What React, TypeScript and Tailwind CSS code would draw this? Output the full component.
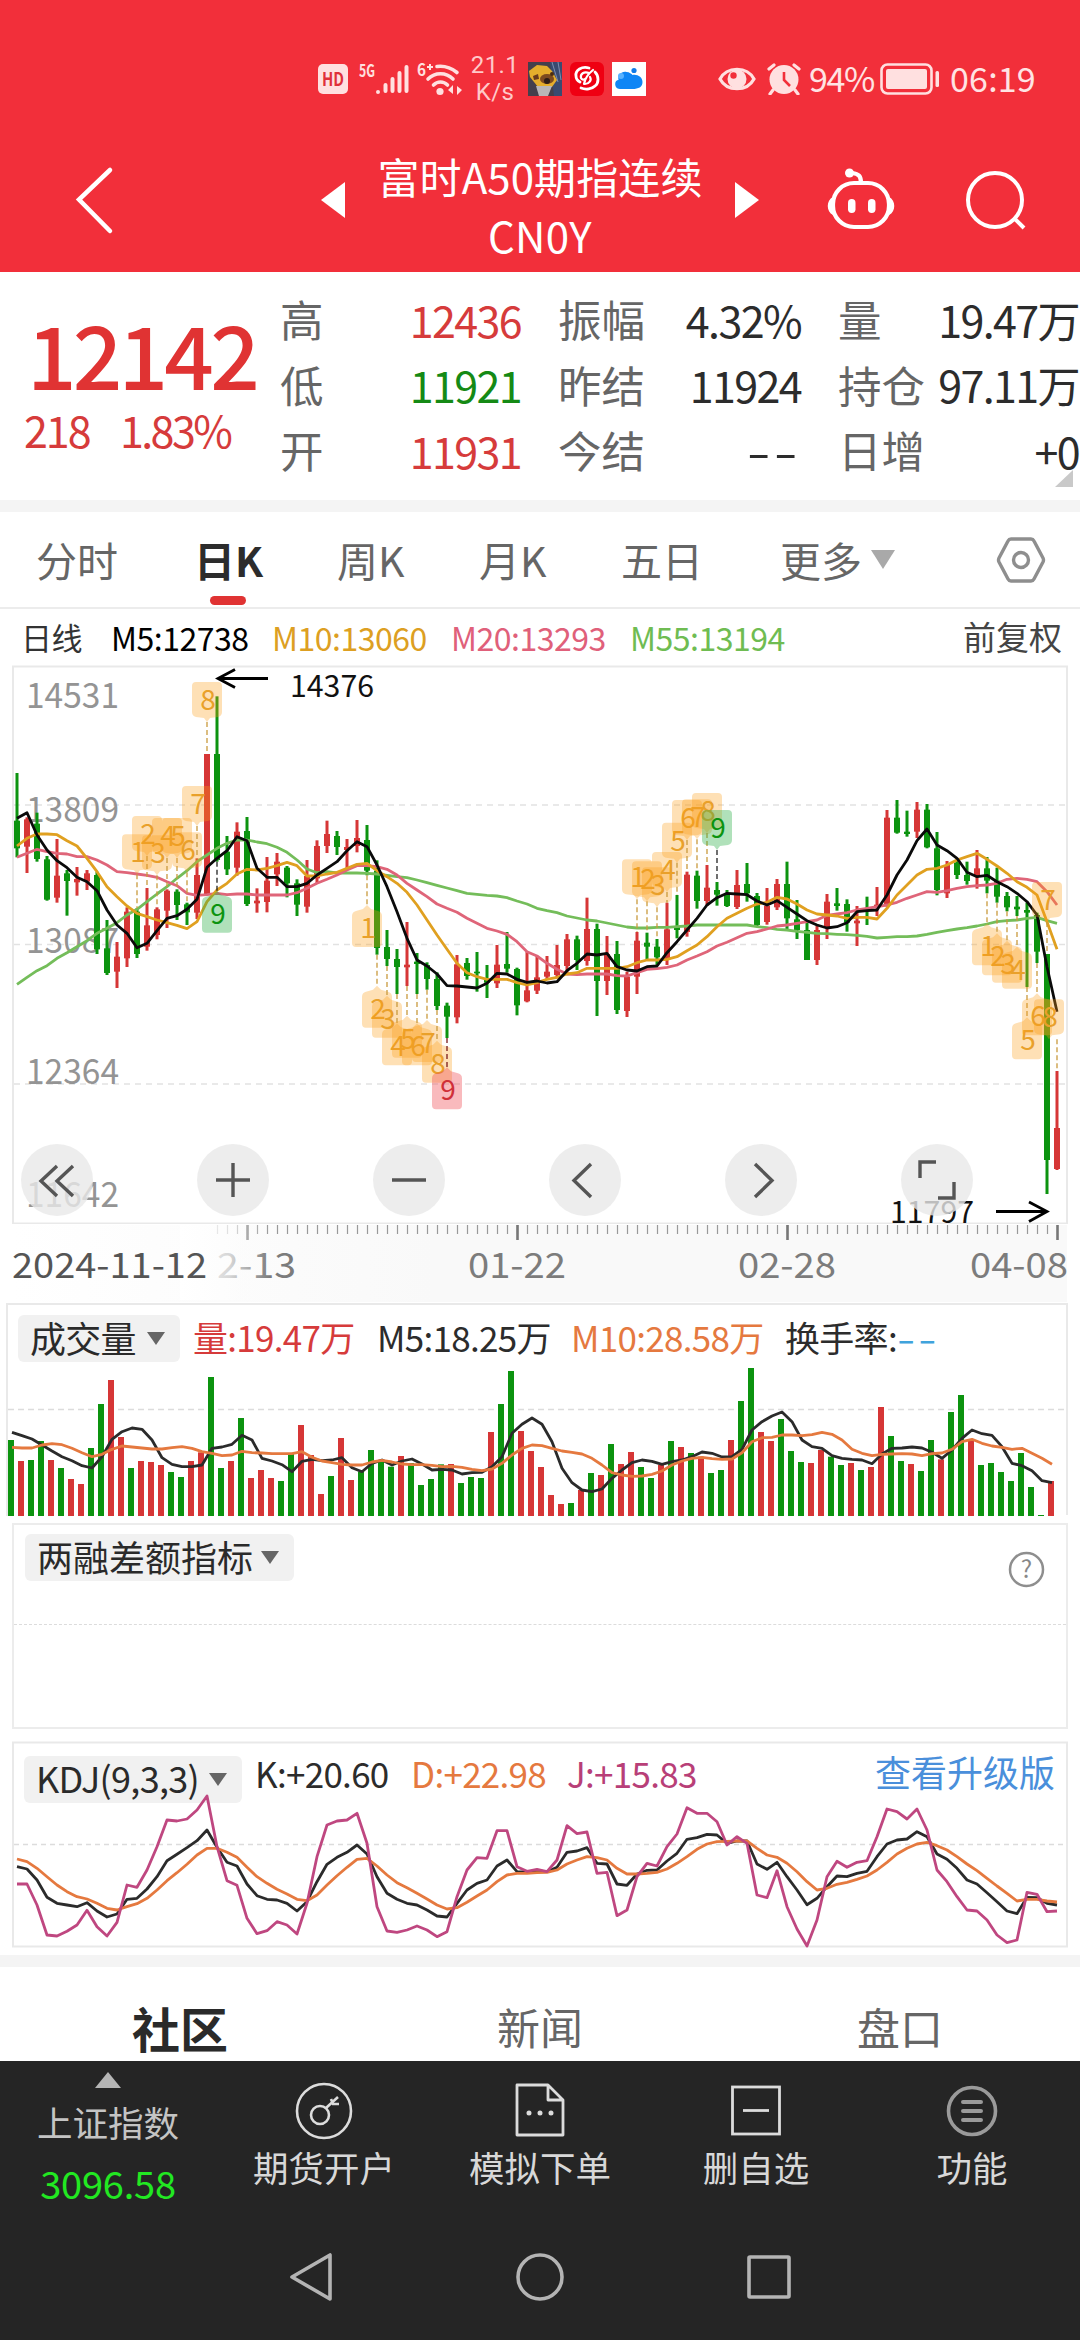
import React from 'react';

const RED = '#d63636';
const GREEN = '#0c930f';

const X0 = 17;
const STEP = 10;

// One row per day: up/down, high, body top, body bottom, low (thirds of a pixel)
type Candle = ['u' | 'd', number, number, number, number];

const candles: Candle[] = [
  ['d', 519, 662, 745, 772], ['u', 652, 658, 740, 819], ['d', 638, 671, 777, 785], ['d', 768, 778, 899, 902],
  ['u', 717, 827, 893, 908], ['d', 810, 820, 843, 947], ['u', 801, 837, 847, 887], ['u', 810, 820, 845, 870],
  ['d', 815, 825, 1048, 1062], ['d', 960, 1045, 1119, 1125], ['u', 1026, 1070, 1115, 1164], ['u', 922, 935, 1075, 1101],
  ['d', 925, 935, 1062, 1074], ['u', 864, 976, 1040, 1052], ['u', 922, 928, 1005, 1018], ['u', 868, 872, 932, 984],
  ['d', 868, 875, 915, 960], ['d', 908, 913, 937, 975], ['u', 775, 825, 938, 957], ['u', 462, 462, 883, 883],
  ['d', 289, 462, 780, 785], ['d', 708, 755, 808, 825], ['u', 667, 695, 803, 827], ['d', 651, 693, 912, 918],
  ['u', 865, 902, 910, 938], ['u', 771, 842, 906, 937], ['u', 759, 785, 823, 858], ['d', 798, 803, 850, 892],
  ['d', 838, 850, 914, 948], ['u', 780, 828, 920, 938], ['u', 721, 738, 835, 852], ['u', 662, 702, 738, 759],
  ['d', 693, 708, 741, 765], ['u', 717, 741, 750, 805], ['u', 660, 714, 738, 757], ['d', 675, 720, 812, 826],
  ['d', 781, 812, 1044, 1064], ['d', 990, 1041, 1077, 1098], ['d', 1047, 1077, 1101, 1182], ['u', 966, 1094, 1102, 1158],
  ['d', 1059, 1085, 1092, 1182], ['d', 1087, 1095, 1137, 1169], ['d', 1117, 1137, 1218, 1230], ['d', 1208, 1217, 1250, 1314],
  ['u', 1065, 1093, 1252, 1270], ['d', 1074, 1089, 1128, 1139], ['d', 1056, 1115, 1120, 1175], ['d', 1095, 1140, 1148, 1194],
  ['u', 1035, 1094, 1150, 1164], ['d', 996, 1092, 1106, 1118], ['d', 1103, 1107, 1216, 1246], ['u', 1055, 1171, 1204, 1207],
  ['u', 1068, 1132, 1172, 1182], ['u', 1068, 1115, 1130, 1140], ['u', 1035, 1095, 1125, 1135], ['u', 1002, 1018, 1098, 1122],
  ['d', 1007, 1018, 1080, 1110], ['u', 893, 987, 1083, 1097], ['d', 971, 987, 1143, 1248], ['u', 1008, 1062, 1143, 1185],
  ['d', 1023, 1062, 1230, 1242], ['u', 1115, 1130, 1233, 1251], ['u', 996, 1022, 1130, 1182], ['d', 998, 1028, 1040, 1080],
  ['d', 1017, 1040, 1072, 1098], ['u', 908, 988, 1080, 1095], ['d', 885, 980, 990, 1015], ['u', 815, 824, 996, 1010],
  ['d', 812, 827, 903, 926], ['u', 795, 863, 903, 918], ['d', 846, 870, 884, 917], ['d', 870, 884, 918, 921],
  ['u', 810, 855, 921, 927], ['d', 789, 852, 880, 905], ['d', 879, 888, 975, 980], ['u', 864, 917, 966, 974],
  ['u', 837, 852, 922, 930], ['d', 785, 852, 955, 987], ['d', 900, 958, 990, 1017], ['d', 962, 990, 1080, 1080],
  ['u', 978, 990, 1080, 1095], ['u', 882, 905, 983, 1017], ['d', 864, 910, 918, 932], ['d', 898, 912, 968, 995],
  ['u', 918, 962, 970, 1038], ['d', 890, 925, 930, 975], ['u', 861, 914, 924, 948], ['u', 630, 653, 912, 920],
  ['d', 600, 653, 698, 701], ['d', 632, 695, 702, 710], ['u', 606, 629, 695, 714], ['d', 612, 629, 742, 745],
  ['d', 696, 745, 870, 886], ['u', 783, 795, 880, 894], ['d', 780, 788, 825, 837], ['d', 785, 825, 843, 854],
  ['u', 750, 805, 825, 866], ['d', 771, 805, 842, 880], ['d', 803, 842, 890, 908], ['d', 876, 888, 922, 934],
  ['d', 888, 920, 928, 948], ['d', 908, 930, 938, 1161], ['d', 938, 945, 1055, 1089], ['d', 1062, 1062, 1680, 1782],
  ['u', 1413, 1584, 1707, 1710],
];

const ma5 = [
  655, 638, 705, 750, 782, 803, 832, 845, 872, 930, 975, 1000, 1043, 1030, 992, 955, 947, 928, 898, 802,
  775, 752, 710, 722, 805, 832, 832, 860, 860, 850, 825, 805, 785, 752, 725, 740, 795, 860, 935, 1015,
  1080, 1098, 1122, 1157, 1158, 1161, 1164, 1150, 1120, 1122, 1138, 1147, 1143, 1149, 1145, 1112, 1090, 1062, 1065, 1060,
  1100, 1110, 1113, 1100, 1098, 1058, 1025, 990, 955, 915, 893, 880, 882, 884, 903, 915, 902, 922, 942, 962,
  975, 984, 980, 968, 935, 932, 930, 885, 825, 780, 722, 687, 735, 752, 775, 817, 830, 826, 845, 860,
  880, 905, 945, 1100, 1235,
];
const ma10 = [
  738, 715, 702, 702, 704, 722, 738, 775, 815, 860, 890, 918, 940, 950, 960, 968, 976, 986, 965, 905,
  870, 850, 822, 808, 810, 805, 797, 787, 797, 828, 828, 822, 817, 805, 793, 790, 812, 830, 850, 877,
  915, 960, 1005, 1048, 1090, 1118, 1130, 1138, 1138, 1138, 1148, 1155, 1148, 1138, 1132, 1122, 1118, 1105, 1105, 1105,
  1105, 1100, 1088, 1080, 1080, 1078, 1070, 1052, 1035, 1010, 980, 955, 940, 925, 912, 907, 892, 897, 912, 930,
  942, 945, 948, 955, 952, 952, 957, 925, 885, 855, 825, 808, 805, 795, 780, 770, 760, 778, 798, 820,
  845, 862, 885, 965, 1048,
];
const ma20 = [
  772, 760, 748, 755, 760, 762, 770, 770, 780, 795, 815, 818, 822, 826, 832, 845, 857, 880, 886, 884,
  880, 884, 882, 882, 885, 885, 885, 885, 878, 865, 850, 838, 825, 810, 797, 797, 800, 808, 825, 850,
  870, 890, 912, 925, 937, 955, 970, 985, 993, 1003, 1025, 1055, 1068, 1090, 1108, 1122, 1124, 1122, 1122, 1122,
  1127, 1128, 1118, 1108, 1106, 1102, 1095, 1080, 1068, 1055, 1038, 1027, 1013, 1000, 995, 987, 978, 975, 970, 965,
  960, 946, 942, 938, 930, 925, 920, 915, 907, 895, 885, 875, 877, 872, 865, 860, 857, 855, 850, 838,
  835, 838, 845, 875, 915,
];
const ma55 = [
  1153, 1132, 1112, 1097, 1075, 1058, 1040, 1022, 1000, 985, 968, 945, 928, 905, 882, 860, 835, 812, 785, 765,
  745, 730, 720, 720, 726, 731, 742, 757, 780, 807, 818, 815, 819, 819, 819, 820, 822, 826, 830, 833,
  840, 848, 856, 864, 872, 880, 883, 886, 888, 893, 903, 912, 925, 932, 938, 948, 954, 960, 963, 969,
  975, 981, 984, 984, 982, 982, 980, 978, 975, 975, 975, 975, 975, 975, 980, 983, 988, 990, 994, 997,
  1000, 1001, 1003, 1004, 1006, 1009, 1014, 1012, 1010, 1010, 1008, 1003, 997, 992, 987, 983, 978, 972, 965, 962,
  960, 955, 952, 962, 970,
];

const volumes = [
  450, 513, 510, 453, 510, 534, 567, 582, 474, 342, 270, 441, 534, 513, 516, 525, 546, 561, 513, 487,
  261, 534, 513, 384, 564, 540, 564, 573, 490, 405, 495, 612, 558, 444, 570, 545, 480, 512, 530, 498,
  519, 585, 567, 523, 522, 579, 561, 564, 426, 342, 243, 423, 483, 531, 615, 642, 639, 600, 549, 555,
  462, 522, 486, 531, 564, 525, 453, 471, 489, 500, 549, 540, 450, 333, 234, 426, 453, 387, 483, 516,
  519, 480, 500, 525, 519, 540, 531, 351, 438, 513, 522, 543, 450, 508, 366, 315, 450, 525, 519, 546,
  573, 489, 591, 675, 573,
];
const vol5 = [
  427, 437, 447, 465, 483, 500, 512, 527, 534, 500, 448, 425, 414, 418, 450, 503, 523, 530, 530, 525,
  475, 471, 463, 436, 450, 505, 513, 524, 545, 514, 508, 512, 510, 503, 533, 545, 520, 510, 525, 513,
  507, 522, 540, 538, 540, 552, 548, 547, 530, 500, 430, 403, 384, 403, 455, 535, 578, 600, 605, 597,
  565, 540, 518, 510, 514, 523, 515, 510, 500, 486, 490, 501, 500, 478, 420, 395, 378, 366, 395, 450,
  470, 475, 497, 505, 508, 510, 521, 492, 475, 474, 471, 474, 487, 505, 480, 445, 420, 431, 436, 470,
  520, 527, 542, 572, 578,
];
const vol10 = [
  472, 474, 474, 465, 461, 464, 475, 488, 500, 493, 478, 468, 471, 474, 477, 477, 473, 470, 475, 485,
  490, 497, 495, 484, 488, 489, 491, 491, 491, 485, 502, 513, 518, 523, 525, 525, 516, 511, 516, 522,
  524, 524, 526, 530, 529, 532, 538, 542, 537, 520, 495, 475, 465, 467, 475, 483, 487, 492, 505, 525,
  548, 555, 559, 558, 553, 543, 525, 513, 505, 502, 506, 508, 507, 488, 455, 443, 442, 435, 435, 437,
  434, 427, 433, 450, 478, 490, 497, 493, 492, 491, 492, 497, 491, 489, 478, 455, 448, 460, 468, 472,
  478, 475, 490, 505, 523,
];

const kLine = [
  410, 417, 450, 502, 520, 525, 530, 518, 543, 561, 552, 508, 505, 477, 440, 392, 373, 353, 332, 300,
  352, 397, 408, 462, 497, 508, 510, 520, 543, 515, 455, 403, 382, 367, 345, 372, 440, 490, 508, 520,
  525, 540, 558, 561, 520, 480, 460, 450, 408, 390, 425, 426, 423, 425, 412, 367, 363, 353, 400, 402,
  462, 466, 432, 421, 420, 393, 370, 328, 323, 313, 315, 340, 333, 333, 402, 418, 397, 440, 480, 524,
  505, 470, 438, 440, 430, 424, 380, 342, 330, 327, 305, 320, 372, 388, 415, 450, 462, 488, 515, 543,
  551, 502, 503, 520, 525,
];
const dLine = [
  387, 395, 415, 440, 465, 485, 500, 507, 520, 535, 540, 530, 521, 505, 480, 452, 428, 403, 375, 355,
  355, 367, 382, 412, 440, 460, 478, 492, 508, 512, 495, 465, 437, 412, 388, 385, 408, 435, 458, 473,
  490, 507, 525, 537, 533, 517, 498, 480, 455, 435, 430, 430, 428, 427, 420, 402, 390, 380, 383, 390,
  415, 432, 432, 430, 427, 417, 400, 380, 358, 342, 335, 334, 333, 333, 355, 375, 382, 400, 425, 455,
  480, 475, 463, 457, 448, 438, 420, 397, 372, 355, 342, 337, 347, 360, 380, 402, 422, 445, 468, 490,
  513, 508, 508, 513, 516,
];
const jLine = [
  462, 462, 525, 615, 618, 604, 585, 541, 590, 618, 577, 465, 472, 420, 350, 270, 273, 267, 240, 198,
  350, 452, 466, 565, 611, 602, 575, 585, 612, 520, 380, 285, 273, 270, 250, 340, 530, 603, 607, 600,
  588, 600, 620, 605, 500, 420, 383, 385, 302, 302, 410, 424, 418, 425, 390, 287, 311, 306, 430, 427,
  557, 540, 440, 400, 408, 350, 312, 233, 250, 250, 275, 345, 320, 340, 495, 503, 422, 530, 597, 648,
  570, 440, 394, 412, 397, 392, 320, 237, 245, 267, 237, 300, 420, 455, 500, 540, 543, 570, 615, 638,
  630, 487, 493, 545, 543,
];

// Nine-turn markers: label, candle index, top, side of the candle, tone
type Marker = [string, number, number, 'above' | 'below', 'orange' | 'green' | 'red'];

const markers: Marker[] = [
  ['1', 12, 703, 'above', 'orange'], ['2', 13, 648, 'above', 'orange'], ['3', 14, 706, 'above', 'orange'],
  ['4', 15, 654, 'above', 'orange'], ['5', 16, 654, 'above', 'orange'], ['6', 17, 697, 'above', 'orange'],
  ['7', 18, 558, 'above', 'orange'], ['8', 19, 246, 'above', 'orange'], ['9', 20, 872, 'below', 'green'],
  ['1', 35, 915, 'below', 'orange'], ['2', 36, 1157, 'below', 'orange'], ['3', 37, 1187, 'below', 'orange'],
  ['4', 38, 1270, 'below', 'orange'], ['5', 39, 1247, 'below', 'orange'], ['6', 40, 1270, 'below', 'orange'],
  ['7', 41, 1260, 'below', 'orange'], ['8', 42, 1322, 'below', 'orange'], ['9', 43, 1402, 'below', 'red'],
  ['1', 62, 778, 'above', 'orange'], ['2', 63, 784, 'above', 'orange'], ['3', 64, 802, 'above', 'orange'],
  ['4', 65, 756, 'above', 'orange'], ['5', 66, 668, 'above', 'orange'], ['6', 67, 600, 'above', 'orange'],
  ['7', 68, 598, 'above', 'orange'], ['8', 69, 579, 'above', 'orange'], ['9', 70, 630, 'above', 'green'],
  ['1', 97, 970, 'below', 'orange'], ['2', 98, 1000, 'below', 'orange'], ['3', 99, 1022, 'below', 'orange'],
  ['4', 100, 1040, 'below', 'orange'], ['5', 101, 1252, 'below', 'orange'], ['6', 102, 1180, 'below', 'orange'],
  ['7', 103, 846, 'above', 'orange'], ['8', 104, 1198, 'above', 'orange'],
];

const markerTones = {
  orange: { box: '#fb9f1a', text: '#e9a02a', line: '#c99a3e', opacity: 0.32 },
  green: { box: '#2fb04a', text: '#0c930f', line: '#222222', opacity: 0.38 },
  red: { box: '#f04a52', text: '#d03038', line: '#7a1a1a', opacity: 0.38 },
};

const px = (i: number) => X0 + i * STEP;

const toPoints = (values: number[], base: number, dx = 0) =>
  values.map((v, i) => `${px(i) + dx},${(base + v / 3).toFixed(1)}`).join(' ');

const Line = ({ values, base, color, dx = 0, width = 2.8 }: { values: number[]; base: number; color: string; dx?: number; width?: number }) => (
  <polyline points={toPoints(values, base, dx)} fill="none" stroke={color} strokeWidth={width} strokeLinejoin="round" />
);

const StatusBar = () => (
  <div className="flex h-[158px] items-center pl-[318px] text-[#ffe3e3]">
    <svg width="30" height="30" viewBox="0 0 30 30">
      <rect width="30" height="30" rx="5" fill="#ffe0e0" />
      <text x="15" y="22" fontSize="19" fontWeight="700" textAnchor="middle" textLength="22" lengthAdjust="spacingAndGlyphs" fill="#e0303a">HD</text>
    </svg>
    <svg className="ml-[10px] overflow-visible" width="52" height="34" viewBox="0 0 52 34">
      <text x="1" y="15" fontSize="17" fontWeight="700" textLength="16" lengthAdjust="spacingAndGlyphs" fill="#ffe0e0">5G</text>
      <g stroke="#ffe0e0" strokeWidth="4" strokeLinecap="round">
        <path d="M20 30v0M27.500 29v-6M34.500 29v-12M41.500 29v-18M48.500 29v-24" />
      </g>
    </svg>
    <svg className="ml-[7px] overflow-visible" width="46" height="34" viewBox="0 0 46 34">
      <text x="0" y="14" fontSize="17" fontWeight="700" fill="#ffe0e0" textLength="9" lengthAdjust="spacingAndGlyphs">6</text>
      <path d="M10 5h6M13 2v6" stroke="#ffe0e0" strokeWidth="2" />
      <g fill="none" stroke="#ffe0e0" strokeWidth="3.600" strokeLinecap="round">
        <path d="M20 4.500c8-1 15 2 20 6" />
        <path d="M11 17c7-7 18-7 25 0" />
        <path d="M16.500 23c4-4 10-4 14 0" />
      </g>
      <circle cx="23" cy="29.500" r="3.600" fill="#ffe0e0" />
      <path d="M31 28l5-5v9zM45 28l-5-4v9z" fill="#ffe0e0" />
    </svg>
    <div className="ml-[10px] flex w-[44px] flex-col items-center font-[Roboto] text-[24px] leading-[27px] tracking-[0.4px] text-[#ffc9c9]">
      <span>21.1</span>
      <span>K/s</span>
    </div>
    <svg className="ml-[11px]" width="34" height="34" viewBox="0 0 34 34">
      <rect width="34" height="34" fill="#453f4c" />
      <path d="M22 0h12v34H26z" fill="#3a4a70" />
      <path d="M24 0l6 20M30 0l3 18" stroke="#7f8fb0" strokeWidth="1" />
      <path d="M1 9l8-6 10 1 5 5 5 9-5 7H10L2 15z" fill="#e5ad2c" />
      <path d="M5 14l5-2 1 5-5 1z" fill="#6a3a1c" />
      <ellipse cx="19" cy="17" rx="7" ry="5" fill="#7d4a1f" />
      <circle cx="19" cy="19" r="3" fill="#2d1c16" />
      <circle cx="24" cy="12" r="2" fill="#4b2b12" />
      <path d="M8 24h16l-4 10H11z" fill="#b9b6b8" />
    </svg>
    <svg className="ml-[8px]" width="34" height="34" viewBox="0 0 34 34">
      <rect width="34" height="34" rx="6" fill="#ef0012" />
      <g fill="none" stroke="#fff" strokeWidth="2.200" strokeLinecap="round">
        <path d="M19 6c-7-2-14 2-13 8 0 3 2 5 4 6" strokeWidth="2.800" />
        <path d="M19 11c-5-2-9 1-8 5 1 2 3 2 4 1" />
        <path d="M23 8c-5 4-8 8-9 14" />
        <path d="M25 10c4 4 4 11 0 14-3 3-9 4-14 2" strokeWidth="2.800" />
        <path d="M20 15c2 3-1 7-5 7" />
      </g>
    </svg>
    <svg className="ml-[8px]" width="34" height="34" viewBox="0 0 34 34">
      <rect width="34" height="34" fill="#fff" />
      <path d="M3.500 24c-1-4 1-6 3-6-1-5 3-9 8-8 3 0 5 2 6 3 5-1 10 2 10 7s-4 7-10 7H8c-2 0-4-1-4.500-3z" fill="#0f86f5" />
      <circle cx="22" cy="8.500" r="2.600" fill="#0f7be8" />
      <circle cx="9" cy="14" r="3" fill="#59b2ff" />
    </svg>
    <svg className="ml-[72px]" width="38" height="28" viewBox="0 0 38 28">
      <path d="M2 14C9 1 29 1 36 14 29 27 9 27 2 14z" fill="none" stroke="#ffe0e0" strokeWidth="3.200" />
      <circle cx="19" cy="14" r="9.500" fill="#ffe0e0" />
      <circle cx="15.500" cy="10.500" r="3.200" fill="#f22f3a" />
    </svg>
    <svg className="ml-[11px]" width="34" height="32" viewBox="0 0 34 32">
      <circle cx="17" cy="16.500" r="14.500" fill="#ffe0e0" />
      <path d="M2 6l5-4M32 6l-5-4M6 27l-3 4M28 27l3 4" stroke="#ffe0e0" strokeWidth="3.200" strokeLinecap="round" />
      <path d="M17 9v8l6 6" fill="none" stroke="#f22f3a" strokeWidth="2.600" />
    </svg>
    <span className="mb-[3px] ml-[8px] w-[65px] text-[34px] leading-none tracking-[-1.4px] whitespace-nowrap">94%</span>
    <svg className="ml-[6px]" width="60" height="34" viewBox="0 0 60 34">
      <rect x="1.500" y="2.500" width="50" height="29" rx="6" fill="none" stroke="#ffe0e0" strokeWidth="2.600" />
      <rect x="6" y="7" width="41" height="20" rx="2" fill="#ffe0e0" />
      <rect x="55.500" y="9" width="3.500" height="16" rx="1.500" fill="#ffe0e0" />
    </svg>
    <span className="mb-[3px] ml-[10px] text-[34px] leading-none tracking-[0.2px]">06:19</span>
  </div>
);

const Header = () => (
  <header className="h-[272px] bg-[#f22f3a] text-white">
    <StatusBar />
    <div className="flex h-[114px]">
      <svg className="mt-[7px] ml-[70px]" width="50" height="72" viewBox="0 0 50 72">
        <path d="M40 5L9 34.500 40 66" fill="none" stroke="#fff" strokeWidth="4.500" strokeLinecap="round" />
      </svg>
      <svg className="mt-[24px] ml-[201px]" width="25" height="36" viewBox="0 0 25 36">
        <path d="M24 0v36L0 18z" fill="#fff" />
      </svg>
      <div className="flex w-[388px] flex-col items-center">
        <span className="-mt-[12px] text-[42px] leading-[60px] tracking-[0.1px]">富时A50期指连续</span>
        <span className="text-[42px] leading-[58px] tracking-[0.3px]">CN0Y</span>
      </div>
      <svg className="mt-[24px]" width="25" height="36" viewBox="0 0 25 36">
        <path d="M1 0v36l24-18z" fill="#fff" />
      </svg>
      <svg className="mt-[9px] ml-[66px]" width="72" height="66" viewBox="0 0 72 66">
        <g fill="none" stroke="#fff" strokeWidth="4.200">
          <rect x="8" y="16" width="56" height="44" rx="21" />
          <path d="M36 16c0-7-2-9-9-10" />
        </g>
        <circle cx="24.500" cy="6" r="4.500" fill="#fff" />
        <path d="M8 30C1 33 1 45 8 48zM64 30c7 3 7 15 0 18z" fill="#fff" />
        <rect x="23" y="32" width="7.500" height="14" rx="3.700" fill="#fff" />
        <rect x="43" y="32" width="7.500" height="14" rx="3.700" fill="#fff" />
      </svg>
      <svg className="mt-[11px] ml-[68px]" width="64" height="64" viewBox="0 0 64 64">
        <circle cx="30" cy="31" r="27" fill="none" stroke="#fff" strokeWidth="4" />
        <path d="M49 49l10 10" stroke="#fff" strokeWidth="4" />
      </svg>
    </div>
  </header>
);

const quoteColumns = [
  {
    width: 'w-[241px]',
    rows: [
      { label: '高', value: '12436', color: 'text-[#d63b3b]' },
      { label: '低', value: '11921', color: 'text-[#158a15]' },
      { label: '开', value: '11931', color: 'text-[#d63b3b]' },
    ],
  },
  {
    width: 'w-[243px]',
    rows: [
      { label: '振幅', value: '4.32%', color: 'text-[#2c2c2c]' },
      { label: '昨结', value: '11924', color: 'text-[#2c2c2c]' },
      { label: '今结', value: '--', color: 'origin-right scale-x-160 tracking-[2px] text-[#2c2c2c]' },
    ],
  },
  {
    width: 'w-[241px]',
    rows: [
      { label: '量', value: '19.47万', color: 'text-[#2c2c2c]' },
      { label: '持仓', value: '97.11万', color: 'text-[#2c2c2c]' },
      { label: '日增', value: '+0', color: 'text-[#2c2c2c]' },
    ],
  },
];

const QuotePanel = () => (
  <section className="relative flex h-[228px] bg-white">
    <div className="w-[280px] shrink-0 font-medium text-[#e03333]">
      <div className="mt-[30px] pl-[27px] text-[87px] leading-[100px] tracking-[-3.8px]">12142</div>
      <div className="mt-[2px] flex pl-[24px] text-[43px] leading-[50px] font-normal tracking-[-2px] text-[#d63b3b]">
        <span className="w-[96px]">218</span>
        <span className="tracking-[-2.6px]">1.83%</span>
      </div>
    </div>
    <div className="flex gap-[37px] pt-[14px]">
      {quoteColumns.map((col) => (
        <div key={col.rows[0].label} className={col.width}>
          {col.rows.map((row) => (
            <div key={row.label} className="flex h-[65.500px] items-center justify-between whitespace-nowrap">
              <span className="text-[43.500px] text-[#666]">{row.label}</span>
              <span className={`text-[43px] ${row.value === '--' ? '' : 'tracking-[-1.6px]'} ${row.color}`}>{row.value}</span>
            </div>
          ))}
        </div>
      ))}
    </div>
    <svg className="absolute right-[7px] bottom-[13px]" width="18" height="17" viewBox="0 0 18 17">
      <path d="M18 0v17H0z" fill="#c9c9c9" />
    </svg>
  </section>
);

const PeriodTabs = () => (
  <nav className="flex h-[97px] items-center border-b-2 border-[#ececec] bg-white text-[41px] text-[#666]">
    <span className="ml-[36px] w-[158px]">分时</span>
    <span className="relative w-[143px] font-bold text-[#2c2c2c]">
      日K
      <i className="absolute bottom-[-15px] left-[16px] h-[9px] w-[36px] rounded-full bg-[#e03333]" />
    </span>
    <span className="w-[142px]">周K</span>
    <span className="w-[142px]">月K</span>
    <span className="w-[159px]">五日</span>
    <span>更多</span>
    <svg className="ml-[9px]" width="24" height="19" viewBox="0 0 24 19">
      <path d="M0 0h24L12 19z" fill="#a9a9a9" />
    </svg>
    <svg className="ml-[101px]" width="50" height="46" viewBox="0 0 50 46">
      <g fill="none" stroke="#8e8e8e" strokeWidth="3.400">
        <path d="M15 2h20q2 0 3 2l9 17q1 2 0 4l-9 17q-1 2-3 2H15q-2 0-3-2L3 25q-1-2 0-4l9-17q1-2 3-2z" />
        <circle cx="25" cy="23" r="7.500" />
      </g>
    </svg>
  </nav>
);

const MaLegend = () => (
  <div className="flex h-[56px] items-center pr-[18px] pl-[21px] text-[32px] tracking-[-0.500px] whitespace-nowrap">
    <span className="w-[90px] text-[31px] text-[#333]">日线</span>
    <span className="w-[161px] text-black">M5:12738</span>
    <span className="w-[179px] text-[#dd9f22]">M10:13060</span>
    <span className="w-[179px] text-[#e0607a]">M20:13293</span>
    <span className="text-[#6fbc52]">M55:13194</span>
    <span className="ml-auto text-[33px] tracking-normal text-[#444]">前复权</span>
  </div>
);

const MarkerTag = ({ marker }: { marker: Marker }) => {
  const [label, index, top, side, tone] = marker;
  const cx = px(index);
  // keep the last tags inside the frame
  const x = Math.min(cx, 1049);
  const y = 600 + top / 3;
  const c = markerTones[tone];
  const [, high, , , low] = candles[index];
  const box =
    side === 'above'
      ? `M${x - 11} ${y}h22q4 0 4 4v26q0 4-4 5l-8 1-3 4-3-4-8-1q-4-1-4-5v-26q0-4 4-4z`
      : `M${x} ${y}l4 4 7 2q4 1 4 5v27q0 4-4 4h-22q-4 0-4-4v-27q0-4 4-5l7-2z`;
  return (
    <g>
      <path
        d={side === 'above' ? `M${cx} ${y + 40}V${600 + high / 3}` : `M${cx} ${600 + low / 3}V${y}`}
        stroke={c.line}
        strokeWidth="1.3"
        strokeDasharray="5 3"
      />
      <path d={box} fill={c.box} fillOpacity={c.opacity} />
      <text x={x + 1} y={side === 'above' ? y + 28 : y + 33} fontSize="28" textAnchor="middle" fill={c.text}>
        {label}
      </text>
    </g>
  );
};

const priceLabels = [
  { text: '14531', y: 708 },
  { text: '13809', y: 822 },
  { text: '13087', y: 953 },
  { text: '12364', y: 1084 },
  { text: '11642', y: 1207 },
];

const zoomIcons = [
  'M36 22L20 37l16 15M52 22L36 37l16 15',
  'M36 19v34M19 36h34',
  'M19 36h34',
  'M42 20L25 36.500 42 53',
  'M30 20l17 16.500L30 53',
  'M19 34V18h16M53 38v16H37',
];

const KLineChart = () => (
  <div className="relative h-[559px]">
    <svg className="block" width="1080" height="559" viewBox="0 665 1080 559">
      <rect x="13" y="666.500" width="1054" height="557" fill="none" stroke="#e9e9e9" strokeWidth="2" />
      <path d="M14 805h1052M14 944.500h1052M14 1084h1052" stroke="#e2e2e2" strokeWidth="1.400" strokeDasharray="6 5" />
      {priceLabels.map((l) => (
        <text key={l.text} x="26" y={l.y} fontSize="35" textLength="93" lengthAdjust="spacingAndGlyphs" fill="#949494">{l.text}</text>
      ))}
      {candles.map(([dir, high, top, bottom, low], i) => (
        <g key={i} fill={dir === 'u' ? RED : GREEN}>
          <rect x={px(i) - 1.5} y={600 + high / 3} width="3" height={(low - high) / 3} />
          <rect x={px(i) - 3} y={600 + top / 3} width="6" height={(bottom - top) / 3} />
        </g>
      ))}
      <Line values={ma55} base={600} color="#74bd5a" />
      <Line values={ma20} base={600} color="#df6579" />
      <Line values={ma10} base={600} color="#e0a020" />
      <Line values={ma5} base={600} color="#0a0a0a" />
      {markers.map((m) => (
        <MarkerTag key={`${m[0]}-${m[1]}`} marker={m} />
      ))}
      <g fill="none" stroke="#000" strokeWidth="2.800">
        <path d="M268 678.500h-50M235 669.500l-17 9 17 9" />
        <path d="M996 1211.500h51M1029 1202l18 9.500-18 10" />
      </g>
      <text x="290" y="697" fontSize="30" textLength="84" lengthAdjust="spacingAndGlyphs" fill="#111">14376</text>
      <text x="890" y="1223" fontSize="30" textLength="84" lengthAdjust="spacingAndGlyphs" fill="#111">11797</text>
    </svg>
    <div className="absolute top-[479px] left-[21px] flex w-[952px] justify-between">
      {zoomIcons.map((d) => (
        <span key={d} className="h-[72px] w-[72px] rounded-full bg-[#e9e9e9]/80">
          <svg width="72" height="72" viewBox="0 0 72 72">
            <path d={d} fill="none" stroke="#555" strokeWidth="3.400" />
          </svg>
        </span>
      ))}
    </div>
  </div>
);

const minorTicks = Array.from({ length: 84 }, (_, i) => 217.5 + i * 10);
const majorTicks = [247.5, 517.5, 787.5, 1057.5];

const DateAxis = () => (
  <svg className="block" width="1080" height="78" viewBox="0 1224 1080 78">
    <defs>
      <linearGradient id="axisBg" x1="0" x2="1" y1="0" y2="0">
        <stop offset="0" stopColor="#ffffff" />
        <stop offset="0.4" stopColor="#f9f9f9" />
      </linearGradient>
      <linearGradient id="axisFade" x1="0" x2="1" y1="0" y2="0">
        <stop offset="0" stopColor="#ffffff" />
        <stop offset="0.55" stopColor="#fdfdfd" stopOpacity="0.7" />
        <stop offset="1" stopColor="#fbfbfb" stopOpacity="0" />
      </linearGradient>
    </defs>
    <rect x="13" y="1225" width="1054" height="77" fill="url(#axisBg)" />
    {minorTicks.map((x) => (
      <path key={x} d={`M${x} 1225v9`} stroke="#999" strokeWidth="1.200" />
    ))}
    {majorTicks.map((x) => (
      <path key={x} d={`M${x} 1225v15`} stroke="#777" strokeWidth="2.600" />
    ))}
    <g fontSize="35" fill="#7c7c7c">
      <text x="217" y="1278" textLength="79" lengthAdjust="spacingAndGlyphs">2-13</text>
      <rect x="180" y="1225" width="90" height="75" fill="url(#axisFade)" />
      <text x="468" y="1278" textLength="98" lengthAdjust="spacingAndGlyphs">01-22</text>
      <text x="738" y="1278" textLength="98" lengthAdjust="spacingAndGlyphs">02-28</text>
      <text x="970" y="1278" textLength="98" lengthAdjust="spacingAndGlyphs">04-08</text>
      <text x="12" y="1278" textLength="195" lengthAdjust="spacingAndGlyphs" fill="#555">2024-11-12</text>
    </g>
  </svg>
);

const IndicatorButton = ({ label, className }: { label: string; className: string }) => (
  <button className={`flex h-[47px] shrink-0 items-center justify-between rounded-md bg-[#f1f1f1] pr-[15px] pl-[12px] text-[36px] leading-none whitespace-nowrap text-[#2a2a2a] ${className}`}>
    <span className="mb-[4px]">{label}</span>
    <svg width="18" height="13" viewBox="0 0 18 13">
      <path d="M0 0h18L9 13z" fill="#666" />
    </svg>
  </button>
);

const VolumePanel = () => (
  <section className="relative h-[221px]">
    <svg className="block" width="1080" height="221" viewBox="0 1302 1080 221">
      <path d="M7 1516V1304h1060v211" fill="none" stroke="#e9e9e9" strokeWidth="2" />
      <path d="M8 1409.500h1058" stroke="#dcdcdc" strokeWidth="1.300" strokeDasharray="6 4" />
      {volumes.map((v, i) => (
        <rect key={i} x={px(i) - 9} y={1290 + v / 3} width="6" height={226 - v / 3} fill={candles[i][0] === 'u' ? RED : GREEN} />
      ))}
      <Line values={vol5} base={1290} color="#2b2b2b" dx={-5} />
      <Line values={vol10} base={1290} color="#e5793f" dx={-5} />
    </svg>
    <div className="absolute top-[13px] left-0 flex items-center pl-[18px] text-[35px] leading-none tracking-[-0.7px] whitespace-nowrap">
      <IndicatorButton label="成交量" className="w-[162px]" />
      <span className="mb-[5px] ml-[13px] w-[184px] text-[#d63b3b]">量:19.47万</span>
      <span className="mb-[5px] w-[194px] text-[#2c2c2c]">M5:18.25万</span>
      <span className="mb-[5px] w-[214px] text-[#e5793f]">M10:28.58万</span>
      <span className="mb-[5px] text-[#2c2c2c]">换手率:</span>
      <span className="mb-[5px] origin-left scale-x-150 tracking-[2px] text-[#3fa3dc]">--</span>
    </div>
  </section>
);

const MarginPanel = () => (
  <section className="mr-[12px] ml-[12px] flex h-[206px] flex-col border-2 border-[#ececec]">
    <div className="flex h-[100px] justify-between border-b border-dashed border-[#dcdcdc] pt-[9px] pr-[21px] pl-[11px]">
      <IndicatorButton label="两融差额指标" className="w-[269px]" />
      <svg className="mt-[17px]" width="37" height="37" viewBox="0 0 37 37">
        <circle cx="18.500" cy="18.500" r="16.500" fill="none" stroke="#8e8e8e" strokeWidth="2.500" />
        <text x="18.500" y="27" fontSize="24" textAnchor="middle" fill="#888">?</text>
      </svg>
    </div>
  </section>
);

const KdjPanel = () => (
  <section className="relative mt-[12px] h-[207px]">
    <svg className="block" width="1080" height="207" viewBox="0 1741 1080 207">
      <rect x="13" y="1742.500" width="1054" height="204" fill="none" stroke="#e9e9e9" strokeWidth="2" />
      <path d="M14 1844.500h1052" stroke="#dcdcdc" strokeWidth="1.300" strokeDasharray="5 4" />
      <Line values={kLine} base={1730} color="#2b2b2b" />
      <Line values={dLine} base={1730} color="#e5793f" />
    </svg>
    <div className="absolute top-[12px] left-0 flex w-full items-center pr-[25px] pl-[24px] text-[35px] leading-none tracking-[-0.7px] whitespace-nowrap">
      <IndicatorButton label="KDJ(9,3,3)" className="w-[218px]" />
      <span className="mb-[14px] ml-[13px] w-[156px] text-[#2c2c2c]">K:+20.60</span>
      <span className="mb-[14px] w-[156px] text-[#e5793f]">D:+22.98</span>
      <span className="mb-[14px] text-[#b83f78]">J:+15.83</span>
      <span className="mb-[16px] ml-auto text-[36px] tracking-normal text-[#4a8fdb]">查看升级版</span>
    </div>
    <svg className="absolute top-0 left-0" width="1080" height="207" viewBox="0 1741 1080 207">
      <Line values={jLine} base={1730} color="#bf4780" />
    </svg>
  </section>
);

const CommunityTabs = () => (
  <nav className="flex h-[94px] items-center pt-[25px] text-[43px] leading-none text-[#666]">
    <span className="flex-1 text-center text-[48px] font-bold text-[#2a2a2a]">社区</span>
    <span className="flex-1 text-center">新闻</span>
    <span className="flex-1 text-center">盘口</span>
  </nav>
);

const toolbarItems = [
  {
    label: '期货开户',
    icon: (
      <svg width="58" height="58" viewBox="0 0 58 58" fill="none" stroke="#dcdcdc" strokeWidth="2.600">
        <circle cx="29" cy="29" r="27" />
        <circle cx="25" cy="33" r="9" />
        <path d="M31 26l12-11M36 17l2 5h6" />
      </svg>
    ),
  },
  {
    label: '模拟下单',
    icon: (
      <svg width="58" height="58" viewBox="0 0 58 58" fill="none" stroke="#dcdcdc" strokeWidth="2.800">
        <path d="M6 3h31l15 15v35H6zM37 3v15h15" strokeLinejoin="round" />
        <path d="M18 31h0M29 31h0M40 31h0" strokeWidth="5" strokeLinecap="round" />
      </svg>
    ),
  },
  {
    label: '删自选',
    icon: (
      <svg width="58" height="58" viewBox="0 0 58 58" fill="none" stroke="#dcdcdc" strokeWidth="2.800">
        <rect x="5.500" y="5" width="47" height="47" />
        <path d="M16 28.500h26" />
      </svg>
    ),
  },
  {
    label: '功能',
    icon: (
      <svg width="58" height="58" viewBox="0 0 58 58" fill="none" stroke="#9a9a9a" strokeWidth="3.600">
        <circle cx="29" cy="29" r="23.500" />
        <path d="M20 20h18M20 29h18M20 38h18" strokeWidth="4" strokeLinecap="round" />
      </svg>
    ),
  },
];

const BottomBar = () => (
  <footer className="h-[279px] bg-[#252525]">
    <div className="grid h-[154px] grid-cols-5">
      <div className="flex flex-col items-center pt-[11px]">
        <svg width="26" height="16" viewBox="0 0 26 16">
          <path d="M0 16h26L13 0z" fill="#b5b5b5" />
        </svg>
        <span className="mt-[10px] text-[35.500px] leading-[48px] text-[#c4c4c4]">上证指数</span>
        <span className="mt-[13px] text-[38px] leading-[48px] tracking-[-0.2px] text-[#22e822]">3096.58</span>
      </div>
      {toolbarItems.map((item) => (
        <div key={item.label} className="flex flex-col items-center pt-[21px]">
          {item.icon}
          <span className="mt-[3px] text-[35.500px] leading-[48px] text-[#d8d8d8]">{item.label}</span>
        </div>
      ))}
    </div>
    <div className="flex h-[125px] items-start justify-center gap-[177px] pt-[36px] pr-[2px]">
      <svg width="52" height="52" viewBox="0 0 52 52" fill="none" stroke="#b4b4b4" strokeWidth="3.600" strokeLinejoin="round">
        <path d="M46 4v44L8 26z" />
      </svg>
      <svg width="52" height="52" viewBox="0 0 52 52" fill="none" stroke="#b4b4b4" strokeWidth="3.600">
        <circle cx="27" cy="26" r="22" />
      </svg>
      <svg width="52" height="52" viewBox="0 0 52 52" fill="none" stroke="#b4b4b4" strokeWidth="3.600">
        <rect x="7" y="6" width="40" height="40" rx="1" />
      </svg>
    </div>
  </footer>
);

const App: React.FC = () => {
  return (
    <div className="h-[2340px] w-[1080px] overflow-hidden bg-white font-['Noto_Sans_CJK_SC',sans-serif]">
      <Header />
      <QuotePanel />
      <div className="h-[12px] bg-[#f4f4f4]" />
      <PeriodTabs />
      <MaLegend />
      <KLineChart />
      <DateAxis />
      <VolumePanel />
      <MarginPanel />
      <KdjPanel />
      <div className="mt-[7px] h-[12px] bg-[#f4f4f4]" />
      <CommunityTabs />
      <BottomBar />
    </div>
  );
};

export default App;
